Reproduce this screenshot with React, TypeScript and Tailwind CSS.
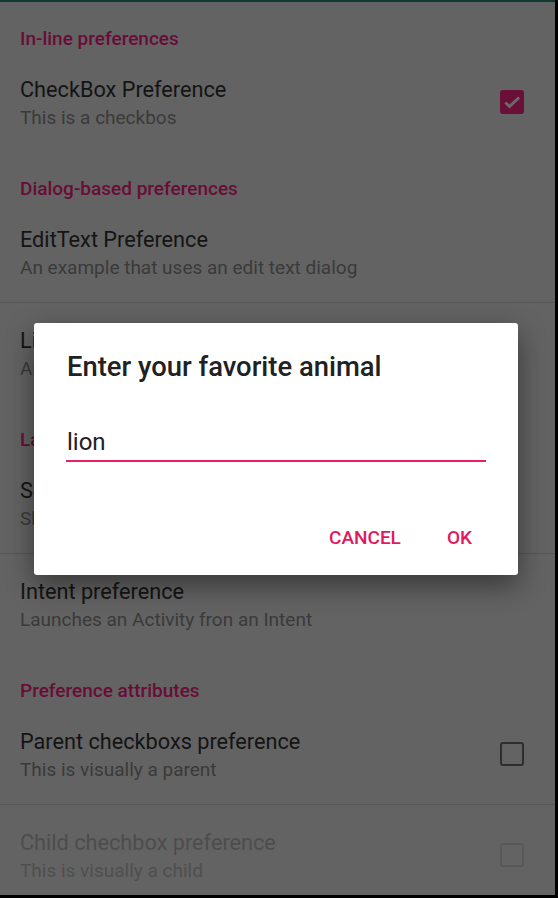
import React from "react";

const font = { fontFamily: "Roboto, 'Noto Sans', sans-serif" };

type Pref = {
  title: string;
  summary: string;
  checkbox?: "on" | "off";
  disabled?: boolean;
};

type Group = { name: string; items: Pref[] };

const groups: Group[] = [
  {
    name: "In-line preferences",
    items: [{ title: "CheckBox Preference", summary: "This is a checkbos", checkbox: "on" }],
  },
  {
    name: "Dialog-based preferences",
    items: [
      { title: "EditText Preference", summary: "An example that uses an edit text dialog" },
      { title: "List preference", summary: "An example that uses a list dialog" },
    ],
  },
  {
    name: "Launch preferences",
    items: [
      { title: "Screen preference", summary: "Shows another screen of preferences" },
      { title: "Intent preference", summary: "Launches an Activity fron an Intent" },
    ],
  },
  {
    name: "Preference attributes",
    items: [
      { title: "Parent checkboxs preference", summary: "This is visually a parent", checkbox: "off" },
      { title: "Child chechbox preference", summary: "This is visually a child", checkbox: "off", disabled: true },
    ],
  },
];

function CheckBox({ checked, disabled }: { checked: boolean; disabled?: boolean }) {
  if (checked) {
    return (
      <div className="w-[24px] h-[24px] rounded-[3px] bg-[#6a0f37] flex items-center justify-center">
        <svg width="20" height="20" viewBox="0 0 24 24">
          <path d="M4 12.5l5 5L20.5 6.5" fill="none" stroke="#6a6a6a" strokeWidth="3.4" />
        </svg>
      </div>
    );
  }
  return (
    <div
      className={`w-[24px] h-[24px] rounded-[3px] border-[2.5px] ${
        disabled ? "border-[#585858]" : "border-[#2e2e2e]"
      }`}
    />
  );
}

function Row({ pref }: { pref: Pref }) {
  return (
    <div className="h-[100px] flex items-center pl-[20px] pr-[31px]">
      <div className="flex-1 mt-[4px]">
        <div
          className={`text-[21.7px] leading-[28px] ${pref.disabled ? "text-[#4d4d4d]" : "text-[#141414]"}`}
        >
          {pref.title}
        </div>
        <div
          className={`text-[19px] leading-[28px] ${pref.disabled ? "text-[#4f4f4f]" : "text-[#3a3a3a]"}`}
        >
          {pref.summary}
        </div>
      </div>
      {pref.checkbox && <CheckBox checked={pref.checkbox === "on"} disabled={pref.disabled} />}
    </div>
  );
}

export default function App() {
  return (
    <div className="w-[558px] h-[898px] bg-black" style={font}>
      <div className="relative w-[555px] h-[895px] overflow-hidden bg-[#636363]">
        <div className="h-[2px] bg-[#0e3a31]" />
        {groups.map((g) => (
          <div key={g.name}>
            <div className="h-[50px] pt-[25px] pl-[20px] text-[19px] leading-[24px] font-medium text-[#690d37]">
              {g.name}
            </div>
            {g.items.map((p, i) => (
              <div key={p.title}>
                {i > 0 && <div className="h-px bg-[#575757]" />}
                <Row pref={p} />
              </div>
            ))}
          </div>
        ))}

        <div className="absolute left-[34px] top-[323px] w-[484px] h-[252px] bg-white rounded-[3px] shadow-[0_10px_28px_rgba(0,0,0,0.45)]">
          <div className="pt-[28px] pl-[33px] text-[27.4px] leading-[32px] font-medium text-[#212121]">
            Enter your favorite animal
          </div>
          <div className="mt-[44px] mx-[32px] pb-[3px] border-b-2 border-[#e91e63]">
            <div className="pl-[1px] text-[24px] leading-[30px] text-[#212121]">lion</div>
          </div>
          <div className="mt-[58px] flex justify-end gap-[46px] pr-[46px] h-[36px] items-center text-[19px] font-medium text-[#e0195f]">
            <span>CANCEL</span>
            <span>OK</span>
          </div>
        </div>
      </div>
    </div>
  );
}
